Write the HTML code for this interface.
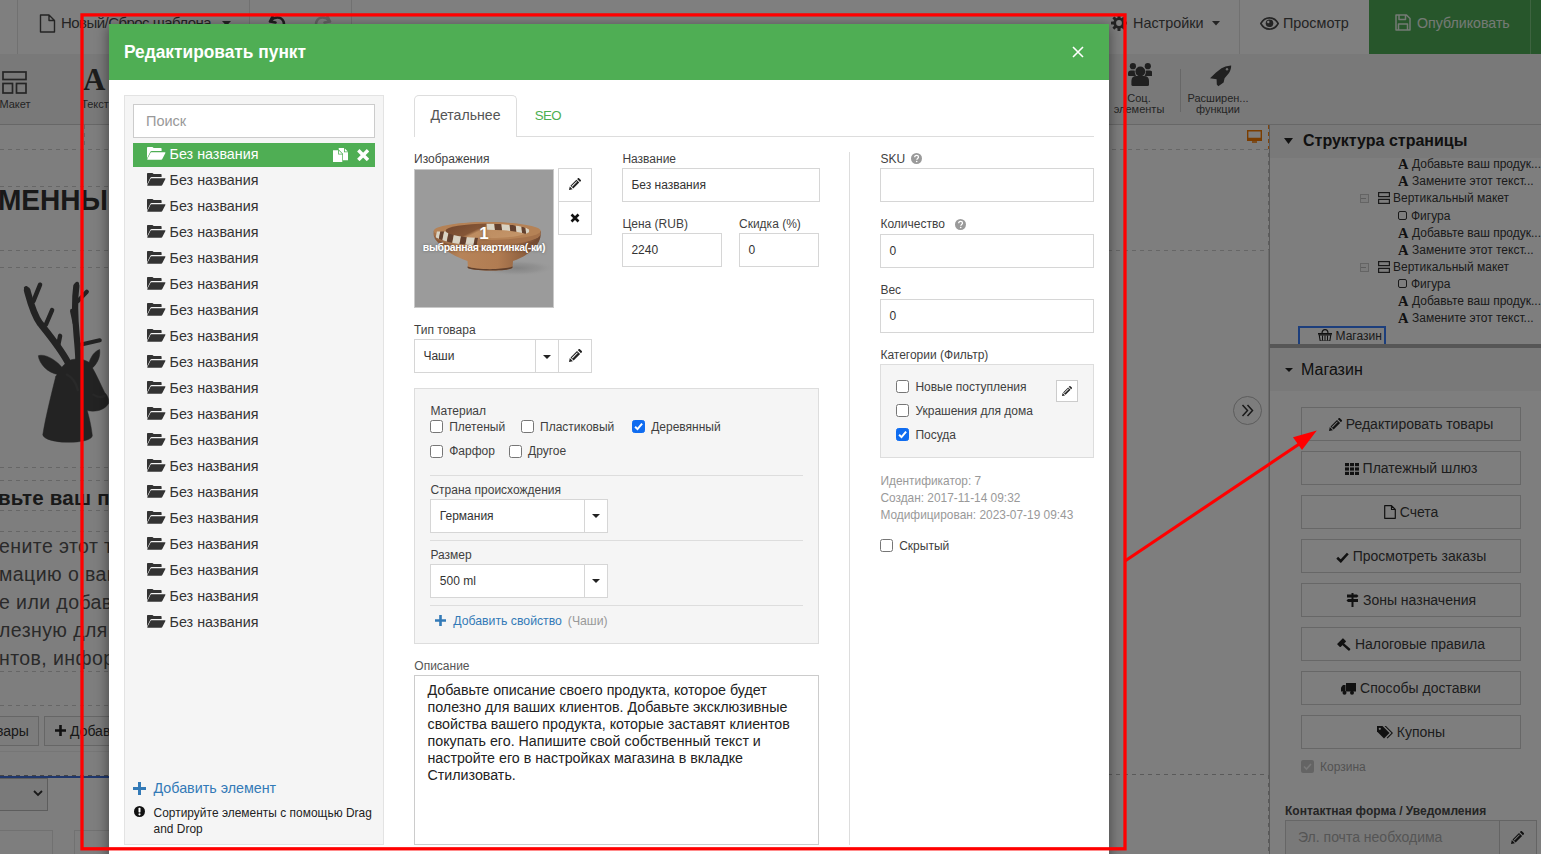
<!DOCTYPE html>
<html lang="ru">
<head>
<meta charset="utf-8">
<title>Редактировать пункт</title>
<style>
*{box-sizing:border-box;margin:0;padding:0}
html,body{width:1541px;height:854px;overflow:hidden;background:#fff;font-family:"Liberation Sans",sans-serif}
body{font-family:"Liberation Sans",sans-serif;font-size:12px;color:#333;position:relative}
.abs{position:absolute}
.nw{white-space:nowrap}
svg{display:block}
/* ---------- background page ---------- */
#page{position:absolute;left:0;top:0;width:1541px;height:854px;background:#fff;overflow:hidden}
#topbar{position:absolute;left:0;top:0;width:1541px;height:54px;background:#fff}
#toolbar{position:absolute;left:0;top:54px;width:1541px;height:71px;background:#f3f3f3;border-bottom:1px solid #cfcfcf}
.vsep{position:absolute;width:1px;background:#e2e2e2}
.tbtxt{position:absolute;font-size:15.5px;color:#484848;white-space:nowrap;line-height:20px;top:13px}
.tlabel{position:absolute;font-size:11px;line-height:11px;color:#4a4a4a;text-align:center;white-space:nowrap}
#canvas{position:absolute;left:0;top:125px;width:1269px;height:729px;background:#fdfdfd;overflow:hidden}
#side{position:absolute;left:1269px;top:125px;width:272px;height:729px;background:#fdfdfd;border-left:1px solid #b5b5b5}
.tree{position:absolute;font-size:12px;line-height:14px;color:#363636;white-space:nowrap}
.sbtn{position:absolute;left:30px;width:220px;height:34px;border:1px solid #cfcfcf;background:#fdfdfd;font-size:14px;line-height:32px;color:#3a3a3a;text-align:center;white-space:nowrap}
.sbtn svg{display:inline-block;vertical-align:-2px;margin-right:4px}
.dash-h{position:absolute;height:1px;background:repeating-linear-gradient(90deg,#cdcdcd 0,#cdcdcd 4px,transparent 4px,transparent 8px)}
.dash-v{position:absolute;width:1px;background:repeating-linear-gradient(180deg,#cdcdcd 0,#cdcdcd 4px,transparent 4px,transparent 8px)}
#dim{position:absolute;left:0;top:0;width:1541px;height:854px;background:rgba(0,0,0,.5)}
/* ---------- modal ---------- */
#modal{position:absolute;left:109px;top:24px;width:1000px;height:840px;background:#fff;box-shadow:0 3px 12px 1px rgba(0,0,0,.43)}
#mhead{position:absolute;left:0;top:0;width:1000px;height:56px;background:#4fae54}
#mtitle{position:absolute;left:15px;top:17px;font-size:18.500px;font-weight:700;color:#fff;white-space:nowrap;line-height:22px;transform:scaleX(.936);transform-origin:0 50%}
#lpanel{position:absolute;background:#f5f5f5;border:1px solid #e3e3e3}
#search{position:absolute;background:#fff;border:1px solid #ccc;font-size:14.5px;color:#999;line-height:33px;padding-left:12px}
.li{position:absolute;height:24px;font-size:14.300px;line-height:24px;color:#333;white-space:nowrap}
.li .fo{position:absolute;left:14.400px;top:5px}
.li span{position:absolute;left:36.600px;top:0}
.li.sel{background:#4fae54;color:#fff}.li.sel span{top:-.7px}.li.sel .fo{top:4.400px}
.lbl{position:absolute;font-size:12px;line-height:14px;color:#3f3f3f;white-space:nowrap}
.inp{position:absolute;height:34px;background:#fff;border:1px solid #d6d6d6;font-size:12px;line-height:32px;color:#333;padding-left:8.400px;white-space:nowrap}
.ibtn{position:absolute;background:#fff;border:1px solid #d6d6d6}
.cb{position:absolute;width:13px;height:13px;border:1px solid #767676;border-radius:2.5px;background:#fff}
.cb.on{background:#0f6cf0;border-color:#0f6cf0}
.cbl{position:absolute;font-size:12px;line-height:14px;color:#3f3f3f;white-space:nowrap}
.hr{position:absolute;height:1px;background:#ddd}
</style>
</head>
<body>
<div id="page">
<div id="topbar">
<div class="vsep" style="left:17px;top:0;height:54px"></div>
<svg class="abs" style="left:39px;top:14px" width="17" height="19" viewBox="0 0 17 19"><path d="M1.5 1h8.5l5.5 5.5V18h-14zM10 1v5.5h5.500" fill="none" stroke="#484848" stroke-width="1.4" stroke-linejoin="round"/></svg>
<div class="tbtxt" style="left:61px;letter-spacing:-.55px;font-size:15px">Новый/Сброс шаблона</div>
<svg class="abs" style="left:222px;top:21px" width="9" height="5" viewBox="0 0 9 5"><path d="M0 0h9L4.500 5z" fill="#484848"/></svg>
<div class="vsep" style="left:249px;top:0;height:54px"></div>
<svg class="abs" style="left:268px;top:13px" width="19" height="19" viewBox="0 0 19 19"><path d="M4.500 3.500L2 8.500l5.500 1M2.500 8C6 3.500 13 3 15.500 8.500c1.500 4-1 8-5.500 9" fill="none" stroke="#3c3c3c" stroke-width="2.600" stroke-linecap="round" stroke-linejoin="round"/></svg>
<svg class="abs" style="left:313px;top:13px" width="19" height="19" viewBox="0 0 19 19"><path d="M14.500 3.500L17 8.500l-5.500 1M16.500 8C13 3.500 6 3 3.500 8.500c-1.500 4 1 8 5.500 9" fill="none" stroke="#c4c4c4" stroke-width="2.600" stroke-linecap="round" stroke-linejoin="round"/></svg>
<div class="vsep" style="left:351px;top:0;height:54px"></div>
<!-- gear -->
<svg class="abs" style="left:1111px;top:15px" width="16" height="16" viewBox="0 0 16 16"><g fill="#484848"><circle cx="8" cy="8" r="5.600"/><g id="gt"><rect x="6.500" y="0" width="3" height="16" rx=".6"/><rect x="6.500" y="0" width="3" height="16" rx=".6" transform="rotate(45 8 8)"/><rect x="6.500" y="0" width="3" height="16" rx=".6" transform="rotate(90 8 8)"/><rect x="6.500" y="0" width="3" height="16" rx=".6" transform="rotate(135 8 8)"/></g></g><circle cx="8" cy="8" r="2.900" fill="#fff"/></svg>
<div class="tbtxt" style="left:1133px;font-size:14.400px">Настройки</div>
<svg class="abs" style="left:1212px;top:21px" width="8" height="4.500" viewBox="0 0 9 5"><path d="M0 0h9L4.500 5z" fill="#484848"/></svg>
<div class="vsep" style="left:1239px;top:0;height:54px"></div>
<!-- eye -->
<svg class="abs" style="left:1260px;top:17px" width="19" height="13" viewBox="0 0 19 13"><path d="M.8 6.500C3 2.500 6 .9 9.500 .9s6.500 1.600 8.700 5.600c-2.200 4-5.200 5.600-8.700 5.600S3 10.500 .8 6.500z" fill="none" stroke="#484848" stroke-width="1.600"/><circle cx="9.500" cy="6.300" r="3.800" fill="#484848"/><circle cx="8.300" cy="5" r="1.200" fill="#fff"/></svg>
<div class="tbtxt" style="left:1283px;font-size:14.400px">Просмотр</div>
<div class="abs" style="left:1369px;top:0;width:172px;height:54px;background:#4fac56"></div>
<div class="abs" style="left:1530px;top:0;width:1px;height:54px;background:#7cc880"></div>
<!-- save -->
<svg class="abs" style="left:1395px;top:14px" width="16" height="17" viewBox="0 0 16 17"><path d="M1 1h10.500l3.500 3.500V16H1zM4 1v4.500h6.500V1M3.500 16v-6h9v6" fill="none" stroke="#e8f5e9" stroke-width="1.500" stroke-linejoin="round"/></svg>
<div class="tbtxt" style="left:1417px;color:#e8f5e9;font-size:14.2px">Опубликовать</div>
</div>

<div id="toolbar">
<!-- maket icon -->
<svg class="abs" style="left:2px;top:17px" width="25" height="23" viewBox="0 0 25 23"><g fill="none" stroke="#4a4a4a" stroke-width="1.700"><rect x="1" y="1" width="23" height="7.500"/><rect x="1" y="12.500" width="9.500" height="9.500"/><rect x="14.500" y="12.500" width="9.500" height="9.500"/></g></svg>
<div class="tlabel" style="left:-10px;width:50px;top:45px">Макет</div>
<div class="abs nw" style="left:83px;top:8px;font-family:'Liberation Serif',serif;font-weight:700;font-size:31px;line-height:36px;color:#3a3a3a">A</div>
<div class="tlabel" style="left:70px;width:50px;top:45px">Текст</div>
<!-- users -->
<svg class="abs" style="left:1127.500px;top:9px" width="24.500" height="23" viewBox="0 0 24.500 23"><g fill="#404040"><circle cx="4.900" cy="3.200" r="3.100"/><circle cx="19.800" cy="3.200" r="3.100"/><circle cx="12.300" cy="8.500" r="4.900"/><path d="M3.400 21.400V18Q3.400 13 8.400 13H16Q21 13 21 18V21.400Q21 22.900 19.500 22.900H4.900Q3.400 22.900 3.400 21.400z"/><path d="M0 12V10.400Q0 7.500 2.900 7.500H5.800Q6.500 7.500 6.800 7.700Q6.300 10.500 8 13H1Q0 13 0 12z"/><path d="M24.500 12V10.400Q24.500 7.500 21.600 7.500H18.700Q18 7.500 17.700 7.700Q18.200 10.500 16.500 13H23.500Q24.500 13 24.500 12z"/></g></svg>
<div class="tlabel" style="left:1099px;width:80px;top:39px">Соц.</div>
<div class="tlabel" style="left:1099px;width:80px;top:50px">элементы</div>
<div class="vsep" style="left:1180px;top:15px;height:43px;background:#cfcfcf"></div>
<!-- rocket -->
<svg class="abs" style="left:1210px;top:10.500px" width="22" height="22" viewBox="0 0 22 22"><path d="M20.900 .4C17 .8 13.500 2 11.500 3.200L6 7.600 0 13.200 6.600 14.200 6.800 19.500 8.300 21.200 13.600 17.400 14.600 13.200 19 8C20.500 5.500 21.200 3 21.200 .5z" fill="#404040"/><circle cx="17" cy="4.200" r="1.200" fill="#ddd"/></svg>
<div class="tlabel" style="left:1178px;width:80px;top:39px">Расширен...</div>
<div class="tlabel" style="left:1178px;width:80px;top:50px">функции</div>
</div>

<div id="canvas">
<!-- coordinates here are page coords minus 125 in y -->
<div class="dash-h" style="left:0;top:24px;width:1269px"></div>
<div class="dash-v" style="left:84px;top:0;height:24px"></div>
<div class="dash-h" style="left:0;top:61px;width:110px"></div>
<div class="abs nw" style="left:-392px;top:52px;width:500px;text-align:right;font-size:30px;font-weight:700;line-height:46px;color:#333;transform:scaleX(.935);transform-origin:100% 50%">СОВРЕМЕННЫ</div>
<div class="dash-h" style="left:0;top:125px;width:110px"></div>
<div class="dash-h" style="left:0;top:142px;width:110px"></div>
<!-- deer -->
<svg class="abs" style="left:0;top:145px" width="130" height="190" viewBox="0 0 584 854"><g fill="#474747" stroke="#474747" stroke-linecap="round" stroke-linejoin="round">
<path stroke-width="30" fill="none" d="M305 415C270 350 220 290 180 240C150 200 135 140 122 92"/>
<path stroke-width="20" fill="none" d="M150 140L180 66M206 245L234 180M262 335L270 296M122 92L117 82"/>
<path stroke-width="28" fill="none" d="M352 405C350 300 325 200 343 72"/>
<path stroke-width="19" fill="none" d="M350 140L390 98M365 335L448 316M336 240L324 184M343 72L346 62"/>
<path stroke-width="2" d="M250 480C230 560 205 660 192 740C200 785 410 785 415 745C410 700 400 660 392 632C430 640 470 630 488 600C492 580 480 560 470 550C450 510 430 460 400 415C370 395 320 395 300 415C280 430 262 455 250 480z"/>
<path stroke-width="2" d="M285 445C250 400 200 375 172 385C175 420 215 465 262 470z"/>
<path stroke-width="2" d="M398 425C405 390 425 365 448 357C452 385 440 420 415 440z"/>
</g><path d="M300 470c20 10 40 30 50 70M420 560c15 10 35 15 50 5" stroke="#5a5a5a" stroke-width="10" fill="none" stroke-linecap="round" opacity=".6"/></svg>
<div class="dash-h" style="left:0;top:342px;width:110px"></div>
<div class="dash-h" style="left:0;top:355px;width:110px"></div>
<div class="abs nw" id="h2" style="left:-2px;top:360px;font-size:20.500px;font-weight:700;line-height:26px;color:#333;letter-spacing:.25px">вьте ваш продукт</div>
<div class="dash-h" style="left:0;top:385px;width:110px"></div>
<div class="dash-h" style="left:0;top:406px;width:110px"></div>
<div class="abs nw" id="ptx" style="left:-1px;top:407px;font-size:19.500px;line-height:28px;color:#555;letter-spacing:.42px">ените этот текст<br>мацию о вашем<br>е или добавьте<br>лезную для ваших<br>нтов, информацию</div>
<div class="dash-h" style="left:0;top:546px;width:110px"></div>
<div class="dash-h" style="left:0;top:580px;width:110px"></div>
<div class="abs" style="left:-30px;top:591px;width:69px;height:30px;border:1px solid #ccc;background:#f8f8f8"></div>
<div class="abs nw" style="left:-4px;top:598px;font-size:14px;line-height:16px;color:#333">вары</div>
<div class="abs" style="left:44px;top:591px;width:120px;height:30px;border:1px solid #ccc;background:#f8f8f8"></div>
<svg class="abs" style="left:55px;top:600px" width="11" height="11" viewBox="0 0 11 11"><path d="M5.500 0v11M0 5.500h11" stroke="#222" stroke-width="2.600"/></svg>
<div class="abs nw" style="left:70px;top:598px;font-size:14px;line-height:16px;color:#333">Добавить</div>
<div class="dash-h" style="left:0;top:649.500px;width:110px;background:repeating-linear-gradient(90deg,#8a8a8a 0,#8a8a8a 4px,transparent 4px,transparent 8px)"></div>
<div class="abs" style="left:0;top:651px;width:110px;height:2px;background:#3f6fd8"></div><div class="abs" style="left:0;top:626px;width:110px;height:1px;background:#ececec"></div>
<div class="abs" style="left:-5px;top:652.500px;width:53px;height:33px;border:1px solid #bbb;background:#f4f4f4"></div>
<svg class="abs" style="left:33px;top:665px" width="10" height="7" viewBox="0 0 10 7"><path d="M1 1l4 4 4-4" fill="none" stroke="#333" stroke-width="1.800"/></svg>
<div class="abs" style="left:-5px;top:705px;width:58px;height:40px;border:1px solid #e2e2e2"></div>
<div class="abs" style="left:74px;top:705px;width:58px;height:40px;border:1px solid #e2e2e2"></div>
<!-- right of modal -->
<div class="dash-h" style="left:1100px;top:125px;width:169px"></div>
<div class="dash-h" style="left:1100px;top:649px;width:169px;background:repeating-linear-gradient(90deg,#b4b4b4 0,#b4b4b4 4px,transparent 4px,transparent 8px)"></div>

<div class="dash-v" style="left:1268px;top:0;height:24px;background:repeating-linear-gradient(180deg,#ff8a1a 0,#ff8a1a 4px,transparent 4px,transparent 7px)"></div>
<div class="dash-v" style="left:1268px;top:28px;height:97px;background:repeating-linear-gradient(180deg,#bdbdbd 0,#bdbdbd 4px,transparent 4px,transparent 8px)"></div><div class="abs" style="left:1268px;top:125px;width:1px;height:525px;background:#d9d9d9"></div><div class="dash-v" style="left:1268px;top:650px;height:80px;background:repeating-linear-gradient(180deg,#b4b4b4 0,#b4b4b4 4px,transparent 4px,transparent 8px)"></div>
<!-- monitor -->
<svg class="abs" style="left:1247px;top:5px" width="15" height="13" viewBox="0 0 15 13"><path d="M.7 .7h13.600v9.600H.7z" fill="none" stroke="#f57a00" stroke-width="1.400"/><path d="M.7 7.800h13.600v2.500H.7zM5 11.300h5v1.500H5z" fill="#f57a00"/></svg>
<!-- >> circle -->
<div class="abs" style="left:1233px;top:270.500px;width:29px;height:29px;border:1px solid #b8b8b8;border-radius:50%;background:#fbfbfb"></div>
<svg class="abs" style="left:1241px;top:278.500px" width="13" height="13" viewBox="0 0 13 13"><path d="M1.500 1l5 5.500-5 5.500M6.500 1l5 5.500-5 5.500" fill="none" stroke="#333" stroke-width="1.500"/></svg>
</div>

<div id="side">
<div class="abs" style="left:0;top:0;width:272px;height:33px;background:#f3f3f3"></div><div class="abs" style="left:0;top:223px;width:272px;height:43px;background:#f3f3f3"></div>
<svg class="abs" style="left:14px;top:13px" width="9" height="6" viewBox="0 0 9 6"><path d="M0 0h9L4.500 6z" fill="#222"/></svg>
<div class="abs nw" style="left:33px;top:6px;font-size:16px;font-weight:700;line-height:20px;color:#222">Структура страницы</div>
<div class="abs" style="left:128px;top:31px;font-family:'Liberation Serif',serif;font-weight:700;font-size:14.500px;line-height:16px;color:#222">A</div>
<div class="tree" style="left:142px;top:32px">Добавьте ваш продук...</div>
<div class="abs" style="left:128px;top:48px;font-family:'Liberation Serif',serif;font-weight:700;font-size:14.500px;line-height:16px;color:#222">A</div>
<div class="tree" style="left:142px;top:49px">Замените этот текст...</div>
<div class="abs" style="left:90px;top:69px;width:9px;height:9px;border:1px solid #c9c9c9;background:#f6f6f6"><div class="abs" style="left:0px;top:3px;width:5px;height:1px;background:#bbb"></div></div>
<svg class="abs" style="left:108px;top:67px" width="12" height="12" viewBox="0 0 12 12"><g fill="none" stroke="#333" stroke-width="1.200"><rect x=".6" y=".6" width="10.800" height="4"/><rect x=".6" y="7.400" width="10.800" height="4"/></g></svg>
<div class="tree" style="left:123px;top:66px">Вертикальный макет</div>
<div class="abs" style="left:128px;top:85.5px;width:9px;height:9px;border:1px solid #333;border-radius:2px"></div>
<div class="tree" style="left:141px;top:83.5px">Фигура</div>
<div class="abs" style="left:128px;top:100px;font-family:'Liberation Serif',serif;font-weight:700;font-size:14.500px;line-height:16px;color:#222">A</div>
<div class="tree" style="left:142px;top:101px">Добавьте ваш продук...</div>
<div class="abs" style="left:128px;top:117px;font-family:'Liberation Serif',serif;font-weight:700;font-size:14.500px;line-height:16px;color:#222">A</div>
<div class="tree" style="left:142px;top:118px">Замените этот текст...</div>
<div class="abs" style="left:90px;top:138px;width:9px;height:9px;border:1px solid #c9c9c9;background:#f6f6f6"><div class="abs" style="left:0px;top:3px;width:5px;height:1px;background:#bbb"></div></div>
<svg class="abs" style="left:108px;top:136px" width="12" height="12" viewBox="0 0 12 12"><g fill="none" stroke="#333" stroke-width="1.200"><rect x=".6" y=".6" width="10.800" height="4"/><rect x=".6" y="7.400" width="10.800" height="4"/></g></svg>
<div class="tree" style="left:123px;top:135px">Вертикальный макет</div>
<div class="abs" style="left:128px;top:153.5px;width:9px;height:9px;border:1px solid #333;border-radius:2px"></div>
<div class="tree" style="left:141px;top:151.5px">Фигура</div>
<div class="abs" style="left:128px;top:168px;font-family:'Liberation Serif',serif;font-weight:700;font-size:14.500px;line-height:16px;color:#222">A</div>
<div class="tree" style="left:142px;top:169px">Добавьте ваш продук...</div>
<div class="abs" style="left:128px;top:185px;font-family:'Liberation Serif',serif;font-weight:700;font-size:14.500px;line-height:16px;color:#222">A</div>
<div class="tree" style="left:142px;top:186px">Замените этот текст...</div>
<div class="abs" style="left:28px;top:201px;width:88px;height:22px;border:2px solid #387cf8"></div>
<svg class="abs" style="left:48px;top:204px" width="14" height="12" viewBox="0 0 14 12"><path d="M4 4.500C4 1.500 5.500 .7 7 .7s3 .8 3 3.800" fill="none" stroke="#222" stroke-width="1.200"/><path d="M0 4h14v1.600H0z" fill="#222"/><path d="M1.200 6h11.600l-1 6H2.200z" fill="none" stroke="#222" stroke-width="1.100"/><path d="M4.500 6.500v5M7 6.500v5M9.500 6.500v5" stroke="#222" stroke-width="1"/></svg>
<div class="tree" style="left:65.5px;top:204px">Магазин</div>
<div class="abs" style="left:0;top:219px;width:272px;height:4px;background:#adadad"></div>
<svg class="abs" style="left:15px;top:243px" width="8" height="4" viewBox="0 0 8 4"><path d="M0 0h8L4 4z" fill="#222"/></svg>
<div class="abs nw" style="left:31px;top:235px;font-size:16px;line-height:20px;color:#222">Магазин</div>
<div class="sbtn" style="left:31px;top:282px"><svg width="13" height="13" viewBox="0 0 13 13"><path d="M0 13l.8-3.900 3.100 3.100zM1.500 8.400L8 1.900l3.100 3.100-6.500 6.500zM2.800 8.700l.7.700 5.300-5.300-.7-.7zM8.800 1.100L9.700.2q.6-.5 1.200 0l1.900 1.900q.5.600 0 1.200l-.9.900z" fill-rule="evenodd" fill="#222"/></svg>Редактировать товары</div>
<div class="sbtn" style="left:31px;top:326px"><svg width="14" height="12" viewBox="0 0 14 12"><g fill="#222"><rect x="0" y="0" width="4" height="3.200"/><rect x="5" y="0" width="4" height="3.200"/><rect x="10" y="0" width="4" height="3.200"/><rect x="0" y="4.400" width="4" height="3.200"/><rect x="5" y="4.400" width="4" height="3.200"/><rect x="10" y="4.400" width="4" height="3.200"/><rect x="0" y="8.800" width="4" height="3.200"/><rect x="5" y="8.800" width="4" height="3.200"/><rect x="10" y="8.800" width="4" height="3.200"/></g></svg>Платежный шлюз</div>
<div class="sbtn" style="left:31px;top:370px"><svg width="12" height="14" viewBox="0 0 12 14"><path d="M.7 .7h6.800l3.800 3.800v8.800H.7zM7.500 .7v3.800h3.800" fill="none" stroke="#222" stroke-width="1.200" stroke-linejoin="round"/></svg>Счета</div>
<div class="sbtn" style="left:31px;top:414px"><svg width="13" height="11" viewBox="0 0 13 11"><path d="M1.200 5.800l3.600 3.400 7-7.700" fill="none" stroke="#222" stroke-width="2.600"/></svg>Просмотреть заказы</div>
<div class="sbtn" style="left:31px;top:458px"><svg width="13" height="14" viewBox="0 0 13 14"><g fill="#222"><rect x="5.500" y="0" width="2" height="14"/><path d="M1 1.500h10l1.500 1.500L11 4.500H1z"/><path d="M12 6h-10L.5 7.500 2 9h10z"/></g></svg>Зоны назначения</div>
<div class="sbtn" style="left:31px;top:502px"><svg width="14" height="13" viewBox="0 0 14 13"><g fill="#222"><rect x="-4.200" y="-2.300" width="8.400" height="4.600" rx=".5" transform="translate(4.600 4.700) rotate(-45)"/><rect x="0" y="-1.200" width="9.800" height="2.400" rx="1" transform="translate(5.600 5.600) rotate(42)"/></g></svg>Налоговые правила</div>
<div class="sbtn" style="left:31px;top:546px"><svg width="15" height="12" viewBox="0 0 15 12"><g fill="#222"><rect x="5" y="0" width="10" height="8.500"/><path d="M0 8.500V4.500L2 2h2.500v6.500z"/><circle cx="3.500" cy="9.700" r="2"/><circle cx="11" cy="9.700" r="2"/></g></svg>Способы доставки</div>
<div class="sbtn" style="left:31px;top:590px"><svg width="16" height="13" viewBox="0 0 16 13"><g fill="#222"><path d="M0 0h5.500l7 7-5.500 5.500-7-7z"/><path d="M7.500 0h1.500l7 7-5.500 5.500-.8-.8L14.500 7z"/></g><circle cx="2.800" cy="2.800" r="1.100" fill="#fdfdfd"/></svg>Купоны</div>
<div class="abs" style="left:31px;top:635px;width:13px;height:13px;border-radius:2px;background:#c9c9c9"><svg width="13" height="13" viewBox="0 0 13 13"><path d="M3 6.500l2.500 2.500 4.500-5" fill="none" stroke="#f3f3f3" stroke-width="1.600"/></svg></div>
<div class="abs nw" style="left:50px;top:635px;font-size:12px;line-height:14px;color:#a5a5a5">Корзина</div>
<div class="abs nw" style="left:15px;top:679px;font-size:12px;font-weight:700;line-height:14px;color:#4a4a4a">Контактная форма / Уведомления</div>
<div class="abs nw" style="left:15px;top:695px;width:215px;height:40px;border:1px solid #cdcdcd;background:#f3f3f3;font-size:14px;line-height:32px;color:#aaa;padding-left:12px">Эл. почта необходима</div>
<div class="abs" style="left:229px;top:695px;width:38px;height:40px;border:1px solid #c8c8c8;background:#f5f5f5"><svg class="abs" style="left:11px;top:10px" width="13" height="13" viewBox="0 0 13 13"><path d="M0 13l.8-3.900 3.100 3.100zM1.500 8.400L8 1.900l3.100 3.100-6.500 6.500zM2.800 8.700l.7.700 5.300-5.300-.7-.7zM8.800 1.100L9.700.2q.6-.5 1.200 0l1.900 1.900q.5.600 0 1.200l-.9.900z" fill-rule="evenodd" fill="#222"/></svg></div>
</div>
</div>
<div id="dim"></div>
<div id="modal">
<div id="mhead"><div id="mtitle">Редактировать пункт</div>
<svg class="abs" style="left:963px;top:22px" width="12" height="12" viewBox="0 0 12 12"><path d="M1 1L11 11M11 1L1 11" stroke="#fff" stroke-width="1.6" fill="none"/></svg>
</div>
<div id="lpanel" style="left:15px;top:71px;width:260px;height:750px">
<div id="search" style="left:8px;top:8px;width:242px;height:34px">Поиск</div>
<div class="li sel" style="left:8px;top:46.5px;width:242px"><svg class="fo" width="18.500" height="12.700" viewBox="0 0 18.500 12.700"><g fill="#fff"><path d="M0 .7Q0 0 .7 0H5.400L6.700 1.100H13.900Q14.600 1.100 14.600 1.800V4.100H4.700Q3.600 4.100 3.100 5.200L0 11.400z"/><path d="M4.300 5.300H18Q18.800 5.300 18.400 6.100L15.300 12.100Q15 12.700 14.200 12.700H.7Q-.1 12.700 .3 11.900L3.400 5.900Q3.700 5.300 4.300 5.300z"/></g></svg><span>Без названия</span><svg class="abs" style="left:199.500px;top:5.300px" width="15.200" height="14.100" viewBox="0 0 15.200 14.100"><g fill="#fff"><path d="M0 2.300H5.200V6.500H9.300V14.100H0z"/><path d="M6 2.700L9.100 5.800H6z"/><path d="M5.700 0H11V4.300H15.200V12.300H10V5.800L5.700 1.600z"/><path d="M11.800 .4L14.900 3.500H11.800z"/></g></svg><svg class="abs" style="left:223.800px;top:6.400px" width="12.300" height="12.300" viewBox="0 0 12.300 12.300"><path d="M1.300 1.300L11 11M11 1.300L1.300 11" stroke="#fff" stroke-width="3.400" fill="none"/></svg></div>
<div class="li" style="left:8px;top:72px;width:242px"><svg class="fo" width="18.500" height="12.700" viewBox="0 0 18.500 12.700"><g fill="#333"><path d="M0 .7Q0 0 .7 0H5.400L6.700 1.100H13.900Q14.600 1.100 14.600 1.800V4.100H4.700Q3.600 4.100 3.100 5.200L0 11.400z"/><path d="M4.300 5.300H18Q18.800 5.300 18.400 6.100L15.300 12.100Q15 12.700 14.200 12.700H.7Q-.1 12.700 .3 11.900L3.400 5.900Q3.700 5.300 4.300 5.300z"/></g></svg><span>Без названия</span></div>
<div class="li" style="left:8px;top:98px;width:242px"><svg class="fo" width="18.500" height="12.700" viewBox="0 0 18.500 12.700"><g fill="#333"><path d="M0 .7Q0 0 .7 0H5.400L6.700 1.100H13.900Q14.600 1.100 14.600 1.800V4.100H4.700Q3.600 4.100 3.100 5.200L0 11.400z"/><path d="M4.300 5.300H18Q18.800 5.300 18.400 6.100L15.300 12.100Q15 12.700 14.200 12.700H.7Q-.1 12.700 .3 11.900L3.400 5.900Q3.700 5.300 4.300 5.300z"/></g></svg><span>Без названия</span></div>
<div class="li" style="left:8px;top:124px;width:242px"><svg class="fo" width="18.500" height="12.700" viewBox="0 0 18.500 12.700"><g fill="#333"><path d="M0 .7Q0 0 .7 0H5.400L6.700 1.100H13.900Q14.600 1.100 14.600 1.800V4.100H4.700Q3.600 4.100 3.100 5.200L0 11.400z"/><path d="M4.300 5.300H18Q18.800 5.300 18.400 6.100L15.300 12.100Q15 12.700 14.200 12.700H.7Q-.1 12.700 .3 11.900L3.400 5.900Q3.700 5.300 4.300 5.300z"/></g></svg><span>Без названия</span></div>
<div class="li" style="left:8px;top:150px;width:242px"><svg class="fo" width="18.500" height="12.700" viewBox="0 0 18.500 12.700"><g fill="#333"><path d="M0 .7Q0 0 .7 0H5.400L6.700 1.100H13.900Q14.600 1.100 14.600 1.800V4.100H4.700Q3.600 4.100 3.100 5.200L0 11.400z"/><path d="M4.300 5.300H18Q18.800 5.300 18.400 6.100L15.300 12.100Q15 12.700 14.200 12.700H.7Q-.1 12.700 .3 11.900L3.400 5.900Q3.700 5.300 4.300 5.300z"/></g></svg><span>Без названия</span></div>
<div class="li" style="left:8px;top:176px;width:242px"><svg class="fo" width="18.500" height="12.700" viewBox="0 0 18.500 12.700"><g fill="#333"><path d="M0 .7Q0 0 .7 0H5.400L6.700 1.100H13.900Q14.600 1.100 14.600 1.800V4.100H4.700Q3.600 4.100 3.100 5.200L0 11.400z"/><path d="M4.300 5.300H18Q18.800 5.300 18.400 6.100L15.300 12.100Q15 12.700 14.200 12.700H.7Q-.1 12.700 .3 11.900L3.400 5.900Q3.700 5.300 4.300 5.300z"/></g></svg><span>Без названия</span></div>
<div class="li" style="left:8px;top:202px;width:242px"><svg class="fo" width="18.500" height="12.700" viewBox="0 0 18.500 12.700"><g fill="#333"><path d="M0 .7Q0 0 .7 0H5.400L6.700 1.100H13.900Q14.600 1.100 14.600 1.800V4.100H4.700Q3.600 4.100 3.100 5.200L0 11.400z"/><path d="M4.300 5.300H18Q18.800 5.300 18.400 6.100L15.300 12.100Q15 12.700 14.200 12.700H.7Q-.1 12.700 .3 11.900L3.400 5.900Q3.700 5.300 4.300 5.300z"/></g></svg><span>Без названия</span></div>
<div class="li" style="left:8px;top:228px;width:242px"><svg class="fo" width="18.500" height="12.700" viewBox="0 0 18.500 12.700"><g fill="#333"><path d="M0 .7Q0 0 .7 0H5.400L6.700 1.100H13.900Q14.600 1.100 14.600 1.800V4.100H4.700Q3.600 4.100 3.100 5.200L0 11.400z"/><path d="M4.300 5.300H18Q18.800 5.300 18.400 6.100L15.300 12.100Q15 12.700 14.200 12.700H.7Q-.1 12.700 .3 11.900L3.400 5.900Q3.700 5.300 4.300 5.300z"/></g></svg><span>Без названия</span></div>
<div class="li" style="left:8px;top:254px;width:242px"><svg class="fo" width="18.500" height="12.700" viewBox="0 0 18.500 12.700"><g fill="#333"><path d="M0 .7Q0 0 .7 0H5.400L6.700 1.100H13.900Q14.600 1.100 14.600 1.800V4.100H4.700Q3.600 4.100 3.100 5.200L0 11.400z"/><path d="M4.300 5.300H18Q18.800 5.300 18.400 6.100L15.300 12.100Q15 12.700 14.200 12.700H.7Q-.1 12.700 .3 11.900L3.400 5.900Q3.700 5.300 4.300 5.300z"/></g></svg><span>Без названия</span></div>
<div class="li" style="left:8px;top:280px;width:242px"><svg class="fo" width="18.500" height="12.700" viewBox="0 0 18.500 12.700"><g fill="#333"><path d="M0 .7Q0 0 .7 0H5.400L6.700 1.100H13.900Q14.600 1.100 14.600 1.800V4.100H4.700Q3.600 4.100 3.100 5.200L0 11.400z"/><path d="M4.300 5.300H18Q18.800 5.300 18.400 6.100L15.300 12.100Q15 12.700 14.200 12.700H.7Q-.1 12.700 .3 11.900L3.400 5.900Q3.700 5.300 4.300 5.300z"/></g></svg><span>Без названия</span></div>
<div class="li" style="left:8px;top:306px;width:242px"><svg class="fo" width="18.500" height="12.700" viewBox="0 0 18.500 12.700"><g fill="#333"><path d="M0 .7Q0 0 .7 0H5.400L6.700 1.100H13.900Q14.600 1.100 14.600 1.800V4.100H4.700Q3.600 4.100 3.100 5.200L0 11.400z"/><path d="M4.300 5.300H18Q18.800 5.300 18.400 6.100L15.300 12.100Q15 12.700 14.200 12.700H.7Q-.1 12.700 .3 11.900L3.400 5.900Q3.700 5.300 4.300 5.300z"/></g></svg><span>Без названия</span></div>
<div class="li" style="left:8px;top:332px;width:242px"><svg class="fo" width="18.500" height="12.700" viewBox="0 0 18.500 12.700"><g fill="#333"><path d="M0 .7Q0 0 .7 0H5.400L6.700 1.100H13.900Q14.600 1.100 14.600 1.800V4.100H4.700Q3.600 4.100 3.100 5.200L0 11.400z"/><path d="M4.300 5.300H18Q18.800 5.300 18.400 6.100L15.300 12.100Q15 12.700 14.200 12.700H.7Q-.1 12.700 .3 11.900L3.400 5.900Q3.700 5.300 4.300 5.300z"/></g></svg><span>Без названия</span></div>
<div class="li" style="left:8px;top:358px;width:242px"><svg class="fo" width="18.500" height="12.700" viewBox="0 0 18.500 12.700"><g fill="#333"><path d="M0 .7Q0 0 .7 0H5.400L6.700 1.100H13.900Q14.600 1.100 14.600 1.800V4.100H4.700Q3.600 4.100 3.100 5.200L0 11.400z"/><path d="M4.300 5.300H18Q18.800 5.300 18.400 6.100L15.300 12.100Q15 12.700 14.200 12.700H.7Q-.1 12.700 .3 11.900L3.400 5.900Q3.700 5.300 4.300 5.300z"/></g></svg><span>Без названия</span></div>
<div class="li" style="left:8px;top:384px;width:242px"><svg class="fo" width="18.500" height="12.700" viewBox="0 0 18.500 12.700"><g fill="#333"><path d="M0 .7Q0 0 .7 0H5.400L6.700 1.100H13.900Q14.600 1.100 14.600 1.800V4.100H4.700Q3.600 4.100 3.100 5.200L0 11.400z"/><path d="M4.300 5.300H18Q18.800 5.300 18.400 6.100L15.300 12.100Q15 12.700 14.200 12.700H.7Q-.1 12.700 .3 11.900L3.400 5.900Q3.700 5.300 4.300 5.300z"/></g></svg><span>Без названия</span></div>
<div class="li" style="left:8px;top:410px;width:242px"><svg class="fo" width="18.500" height="12.700" viewBox="0 0 18.500 12.700"><g fill="#333"><path d="M0 .7Q0 0 .7 0H5.400L6.700 1.100H13.900Q14.600 1.100 14.600 1.800V4.100H4.700Q3.600 4.100 3.100 5.200L0 11.400z"/><path d="M4.300 5.300H18Q18.800 5.300 18.400 6.100L15.300 12.100Q15 12.700 14.200 12.700H.7Q-.1 12.700 .3 11.900L3.400 5.900Q3.700 5.300 4.300 5.300z"/></g></svg><span>Без названия</span></div>
<div class="li" style="left:8px;top:436px;width:242px"><svg class="fo" width="18.500" height="12.700" viewBox="0 0 18.500 12.700"><g fill="#333"><path d="M0 .7Q0 0 .7 0H5.400L6.700 1.100H13.900Q14.600 1.100 14.600 1.800V4.100H4.700Q3.600 4.100 3.100 5.200L0 11.400z"/><path d="M4.300 5.300H18Q18.800 5.300 18.400 6.100L15.300 12.100Q15 12.700 14.200 12.700H.7Q-.1 12.700 .3 11.900L3.400 5.900Q3.700 5.300 4.300 5.300z"/></g></svg><span>Без названия</span></div>
<div class="li" style="left:8px;top:462px;width:242px"><svg class="fo" width="18.500" height="12.700" viewBox="0 0 18.500 12.700"><g fill="#333"><path d="M0 .7Q0 0 .7 0H5.400L6.700 1.100H13.900Q14.600 1.100 14.600 1.800V4.100H4.700Q3.600 4.100 3.100 5.200L0 11.400z"/><path d="M4.300 5.300H18Q18.800 5.300 18.400 6.100L15.300 12.100Q15 12.700 14.200 12.700H.7Q-.1 12.700 .3 11.900L3.400 5.900Q3.700 5.300 4.300 5.300z"/></g></svg><span>Без названия</span></div>
<div class="li" style="left:8px;top:488px;width:242px"><svg class="fo" width="18.500" height="12.700" viewBox="0 0 18.500 12.700"><g fill="#333"><path d="M0 .7Q0 0 .7 0H5.400L6.700 1.100H13.900Q14.600 1.100 14.600 1.800V4.100H4.700Q3.600 4.100 3.100 5.200L0 11.400z"/><path d="M4.300 5.300H18Q18.800 5.300 18.400 6.100L15.300 12.100Q15 12.700 14.200 12.700H.7Q-.1 12.700 .3 11.900L3.400 5.900Q3.700 5.300 4.300 5.300z"/></g></svg><span>Без названия</span></div>
<div class="li" style="left:8px;top:514px;width:242px"><svg class="fo" width="18.500" height="12.700" viewBox="0 0 18.500 12.700"><g fill="#333"><path d="M0 .7Q0 0 .7 0H5.400L6.700 1.100H13.900Q14.600 1.100 14.600 1.800V4.100H4.700Q3.600 4.100 3.100 5.200L0 11.400z"/><path d="M4.300 5.300H18Q18.800 5.300 18.400 6.100L15.300 12.100Q15 12.700 14.200 12.700H.7Q-.1 12.700 .3 11.900L3.400 5.900Q3.700 5.300 4.300 5.300z"/></g></svg><span>Без названия</span></div>
<svg class="abs" style="left:7.5px;top:685.5px" width="13" height="13" viewBox="0 0 13 13"><path d="M6.500 0v13M0 6.500h13" stroke="#337ab7" stroke-width="3"/></svg>
<div class="abs nw" style="left:28.5px;top:684px;font-size:14.300px;line-height:16px;color:#337ab7">Добавить элемент</div>
<svg class="abs" style="left:8.5px;top:710px" width="11" height="11" viewBox="0 0 11 11"><circle cx="5.500" cy="5.500" r="5.500" fill="#111"/><rect x="4.500" y="1.800" width="2" height="4.600" rx=".6" fill="#fff"/><circle cx="5.500" cy="8.300" r="1.100" fill="#fff"/></svg>
<div class="abs" style="left:28.5px;top:708.5px;font-size:11.900px;line-height:16.300px;color:#222;white-space:nowrap;letter-spacing:.04px">Сортируйте элементы с помощью Drag<br>and Drop</div>
</div>
<div class="abs" style="left:305px;top:111.5px;width:680px;height:1px;background:#ddd"></div>
<div class="abs" style="left:305px;top:71px;width:103px;height:41.500px;border:1px solid #ddd;border-bottom:none;border-radius:5px 5px 0 0;background:#fff"></div>
<div class="abs nw" style="left:321.4px;top:83px;font-size:14.100px;line-height:17px;color:#555">Детальнее</div>
<div class="abs nw" style="left:425.7px;top:83px;font-size:13.300px;letter-spacing:-.55px;line-height:17px;color:#4caf50">SEO</div>
<div class="lbl" style="left:305px;top:128px;">Изображения</div>
<div class="abs" style="left:305px;top:144.5px;width:140px;height:139px;background:#9b9b9b;border:1px solid #c9c9c9;overflow:hidden"><svg class="abs" style="left:0;top:0" width="138" height="137" viewBox="0 0 138 137">
<defs>
<linearGradient id="bw" x1="0" y1="0" x2="1" y2="0"><stop offset="0" stop-color="#8f5f3d"/><stop offset=".25" stop-color="#b78459"/><stop offset=".6" stop-color="#b17c52"/><stop offset=".85" stop-color="#8e603f"/><stop offset="1" stop-color="#6e4630"/></linearGradient>
<linearGradient id="bi" x1="0" y1="0" x2="1" y2=".35"><stop offset="0" stop-color="#6f452e"/><stop offset=".45" stop-color="#855636"/><stop offset=".52" stop-color="#bd8c60"/><stop offset="1" stop-color="#c39468"/></linearGradient>
<radialGradient id="sh" cx=".5" cy=".5" r=".5"><stop offset="0" stop-color="#828282"/><stop offset=".6" stop-color="#8e8e8e" stop-opacity=".7"/><stop offset="1" stop-color="#9b9b9b" stop-opacity="0"/></radialGradient>
<clipPath id="fw"><ellipse cx="72.200" cy="63.800" rx="53.500" ry="11.800"/></clipPath>
<clipPath id="ie"><ellipse cx="72.600" cy="60.800" rx="42" ry="7.200"/></clipPath>
<clipPath id="fa"><path d="M30.600 60.800A42 7.200 0 0 1 114.600 60.800L114.600 67A42 7.200 0 0 0 30.600 67z"/></clipPath>
</defs>
<ellipse cx="102" cy="98" rx="38" ry="8" fill="url(#sh)"/>
<path d="M18.700 61L18.800 66C24 78 38 86 52.500 91L53 97.500C53.500 101.500 97 101.500 97.500 97.500L98 91C110 87 124 78 125.600 66L125.700 61z" fill="url(#bw)"/>
<path d="M52.500 96.500c8 3.500 37 3.500 45 0v1c-.5 4-44.500 4-45 0z" fill="#5f3f2c"/>
<path d="M19 67c10 14 96 14 106.500 0c-4 17-102 17-106.500 0z" fill="#6e4630" opacity=".45"/>
<ellipse cx="72.200" cy="63.800" rx="53.500" ry="11.800" fill="#a5724b"/><ellipse cx="72.200" cy="61" rx="53.500" ry="9" fill="#b58256"/><g clip-path="url(#fw)"><path d="M21.9 61.500L25.3 61.500L21.6 80L18.2 80z" fill="#d9d3c4"/><path d="M25.3 61.500L29.1 61.500L25.4 80L21.6 80z" fill="#63412f"/><path d="M29.1 61.500L33.8 61.500L30.1 80L25.4 80z" fill="#d9d3c4"/><path d="M33.8 61.500L39.5 61.500L35.8 80L30.1 80z" fill="#63412f"/><path d="M39.5 61.500L47.0 61.500L43.3 80L35.8 80z" fill="#d9d3c4"/><path d="M47.0 61.500L53.0 61.500L49.3 80L43.3 80z" fill="#63412f"/><path d="M53.0 61.500L61.2 61.500L57.5 80L49.3 80z" fill="#d9d3c4"/><path d="M61.2 61.500L64.3 61.500L60.6 80L57.5 80z" fill="#63412f"/></g>
<ellipse cx="72.600" cy="60.800" rx="42" ry="7.200" fill="url(#bi)"/>
<g clip-path="url(#ie)"><g clip-path="url(#fa)"><path d="M71.1 50L78.9 50L80.4 64L72.6 64z" fill="#d9d3c4"/><path d="M78.9 50L86.0 50L87.5 64L80.4 64z" fill="#63412f"/><path d="M86.0 50L94.1 50L95.6 64L87.5 64z" fill="#d9d3c4"/><path d="M94.1 50L100.2 50L101.7 64L95.6 64z" fill="#63412f"/><path d="M100.2 50L105.7 50L107.2 64L101.7 64z" fill="#d9d3c4"/><path d="M105.7 50L109.7 50L111.2 64L107.2 64z" fill="#63412f"/><path d="M109.7 50L112.9 50L114.4 64L111.2 64z" fill="#d9d3c4"/></g></g>
</svg><div class="abs" style="left:0;top:54px;width:138px;text-align:center;font-size:17px;font-weight:700;line-height:20px;color:#fff;text-shadow:0 0 3px rgba(0,0,0,.35)">1</div><div class="abs nw" id="vk" style="left:-10px;top:71.500px;width:158px;text-align:center;font-size:10.500px;font-weight:700;line-height:12px;color:#fff;letter-spacing:-.35px;text-shadow:0 0 3px rgba(0,0,0,.35)">выбранная картинка(-ки)</div></div>
<div class="ibtn" style="left:449px;top:144px;width:34px;height:34px"><div class="abs" style="left:10px;top:9px"><svg width="12" height="12" viewBox="0 0 13 13"><path d="M0 13l.8-3.900 3.100 3.100zM1.500 8.400L8 1.900l3.100 3.100-6.500 6.500zM2.800 8.700l.7.700 5.300-5.300-.7-.7zM8.800 1.100L9.700.2q.6-.5 1.200 0l1.900 1.900q.5.600 0 1.200l-.9.900z" fill-rule="evenodd" fill="#222"/></svg></div></div>
<div class="ibtn" style="left:449px;top:177px;width:34px;height:34px"><svg class="abs" style="left:11px;top:11px" width="10" height="10" viewBox="0 0 10 10"><path d="M1.500 1.500l7 7M8.500 1.500l-7 7" stroke="#111" stroke-width="2.600" fill="none"/></svg></div>
<div class="lbl" style="left:305px;top:299.2px;">Тип товара</div>
<div class="inp" style="left:305px;top:315px;width:178px;height:34px;line-height:32px">Чаши</div>
<div class="abs" style="left:426px;top:315px;width:1px;height:34px;background:#d6d6d6"></div>
<div class="abs" style="left:449px;top:315px;width:1px;height:34px;background:#d6d6d6"></div>
<svg class="abs" style="left:434px;top:330.5px" width="8" height="4" viewBox="0 0 8 4"><path d="M0 0h8L4 4z" fill="#222"/></svg>
<div class="abs" style="left:459.5px;top:324.5px"><svg width="13" height="13" viewBox="0 0 13 13"><path d="M0 13l.8-3.900 3.100 3.100zM1.500 8.400L8 1.900l3.100 3.100-6.500 6.500zM2.800 8.700l.7.700 5.300-5.300-.7-.7zM8.800 1.100L9.700.2q.6-.5 1.200 0l1.900 1.900q.5.600 0 1.200l-.9.900z" fill-rule="evenodd" fill="#222"/></svg></div>
<div class="lbl" style="left:513.4px;top:128px;">Название</div>
<div class="inp" style="left:513px;top:144px;width:198px;height:34px;line-height:32px">Без названия</div>
<div class="lbl" style="left:513.4px;top:193px;">Цена (RUB)</div>
<div class="inp" style="left:513px;top:209px;width:100px;height:34px;line-height:32px">2240</div>
<div class="lbl" style="left:630px;top:193px;">Скидка (%)</div>
<div class="inp" style="left:630px;top:209px;width:80px;height:34px;line-height:32px">0</div>
<div class="abs" style="left:305px;top:364px;width:405px;height:255.500px;background:#f5f5f5;border:1px solid #ddd"></div>
<div class="lbl" style="left:321.400px;top:379.7px;">Материал</div>
<div class="cb" style="left:321.400px;top:396px"></div>
<div class="cbl" style="left:340.2px;top:395.7px">Плетеный</div>
<div class="cb" style="left:412px;top:396px"></div>
<div class="cbl" style="left:431px;top:395.7px">Пластиковый</div>
<div class="cb on" style="left:523px;top:396px"><svg width="11" height="11" viewBox="0 0 11 11" style="position:absolute;left:0;top:0"><path d="M2.100 5.700l2.400 2.400 4.600-5.500" fill="none" stroke="#fff" stroke-width="2"/></svg></div>
<div class="cbl" style="left:542.2px;top:395.7px">Деревянный</div>
<div class="cb" style="left:321.400px;top:420.5px"></div>
<div class="cbl" style="left:340.2px;top:420.2px">Фарфор</div>
<div class="cb" style="left:400px;top:420.5px"></div>
<div class="cbl" style="left:419px;top:420.2px">Другое</div>
<div class="hr" style="left:321.400px;top:451px;width:373px"></div>
<div class="lbl" style="left:321.400px;top:458.7px;">Страна происхождения</div>
<div class="inp" style="left:321.400px;top:475px;width:178px;height:34px;line-height:32px">Германия</div>
<div class="abs" style="left:475px;top:475px;width:1px;height:34px;background:#d6d6d6"></div>
<svg class="abs" style="left:483px;top:490px" width="8" height="4" viewBox="0 0 8 4"><path d="M0 0h8L4 4z" fill="#222"/></svg>
<div class="hr" style="left:321.400px;top:516px;width:373px"></div>
<div class="lbl" style="left:321.400px;top:524px;">Размер</div>
<div class="inp" style="left:321.400px;top:540px;width:178px;height:34px;line-height:32px">500 ml</div>
<div class="abs" style="left:475px;top:540px;width:1px;height:34px;background:#d6d6d6"></div>
<svg class="abs" style="left:483px;top:555px" width="8" height="4" viewBox="0 0 8 4"><path d="M0 0h8L4 4z" fill="#222"/></svg>
<div class="hr" style="left:321.400px;top:581px;width:373px"></div>
<svg class="abs" style="left:326px;top:591px" width="11" height="11" viewBox="0 0 11 11"><path d="M5.500 0v11M0 5.500h11" stroke="#337ab7" stroke-width="2.600"/></svg>
<div class="abs nw" style="left:344.3px;top:589.5px;font-size:12.250px;line-height:14px;color:#337ab7">Добавить свойство <span style="color:#999;margin-left:2.500px">(Чаши)</span></div>
<div class="lbl" style="left:305.3px;top:635px;color:#555">Описание</div>
<div class="abs" style="left:305px;top:651px;width:405px;height:170px;background:#fff;border:1px solid #ccc;padding:5.500px 0 0 12.500px;font-size:14.250px;line-height:17px;color:#222;white-space:nowrap">Добавьте описание своего продукта, которое будет<br>полезно для ваших клиентов. Добавьте эксклюзивные<br>свойства вашего продукта, которые заставят клиентов<br>покупать его. Напишите свой собственный текст и<br>настройте его в настройках магазина в вкладке<br>Стилизовать.</div>
<div class="abs" style="left:740px;top:128px;width:1px;height:693px;background:#ddd"></div>
<div class="lbl" style="left:771.4px;top:127.5px;">SKU</div>
<svg class="abs" style="left:801.5px;top:129.0px" width="11" height="11" viewBox="0 0 11 11"><circle cx="5.500" cy="5.500" r="5.500" fill="#9a9a9a"/><path d="M3.700 4.300c0-1.200 .8-1.900 1.900-1.900s1.900 .7 1.900 1.700c0 1.400-1.700 1.400-1.700 2.700" fill="none" stroke="#fff" stroke-width="1.300"/><circle cx="5.700" cy="8.500" r=".8" fill="#fff"/></svg>
<div class="inp" style="left:771px;top:144px;width:214px;height:34px;line-height:32px"></div>
<div class="lbl" style="left:771.4px;top:193px;">Количество</div>
<svg class="abs" style="left:845.8px;top:194.5px" width="11" height="11" viewBox="0 0 11 11"><circle cx="5.500" cy="5.500" r="5.500" fill="#9a9a9a"/><path d="M3.700 4.300c0-1.200 .8-1.900 1.900-1.900s1.900 .7 1.900 1.700c0 1.400-1.700 1.400-1.700 2.700" fill="none" stroke="#fff" stroke-width="1.300"/><circle cx="5.700" cy="8.500" r=".8" fill="#fff"/></svg>
<div class="inp" style="left:771px;top:210px;width:214px;height:34px;line-height:32px">0</div>
<div class="lbl" style="left:771.4px;top:258.7px;">Вес</div>
<div class="inp" style="left:771px;top:275px;width:214px;height:34px;line-height:32px">0</div>
<div class="lbl" style="left:771.4px;top:323.8px;">Категории (Фильтр)</div>
<div class="abs" style="left:771px;top:340px;width:214px;height:94px;background:#f5f5f5;border:1px solid #ddd"></div>
<div class="cb" style="left:787px;top:356.2px"></div>
<div class="cbl" style="left:806.4px;top:356px">Новые поступления</div>
<div class="cb" style="left:787px;top:380px"></div>
<div class="cbl" style="left:806.4px;top:379.8px">Украшения для дома</div>
<div class="cb on" style="left:787px;top:404.2px"><svg width="11" height="11" viewBox="0 0 11 11" style="position:absolute;left:0;top:0"><path d="M2.100 5.700l2.400 2.400 4.600-5.500" fill="none" stroke="#fff" stroke-width="2"/></svg></div>
<div class="cbl" style="left:806.4px;top:404px">Посуда</div>
<div class="ibtn" style="left:947px;top:356px;width:22px;height:22px;border-color:#ccc"><div class="abs" style="left:5px;top:5px"><svg width="10" height="10" viewBox="0 0 13 13"><path d="M0 13l.8-3.900 3.100 3.100zM1.500 8.400L8 1.900l3.100 3.100-6.500 6.500zM2.800 8.700l.7.700 5.300-5.300-.7-.7zM8.800 1.100L9.700.2q.6-.5 1.200 0l1.900 1.900q.5.600 0 1.200l-.9.900z" fill-rule="evenodd" fill="#222"/></svg></div></div>
<div class="abs nw" style="left:771.4px;top:448.5px;font-size:11.900px;line-height:17px;color:#999">Идентификатор: 7<br>Создан: 2017-11-14 09:32<br>Модифицирован: 2023-07-19 09:43</div>
<div class="cb" style="left:771.4px;top:515.2px"></div>
<div class="cbl" style="left:790.2px;top:515px">Скрытый</div>
</div>
<svg class="abs" style="left:0;top:0" width="1541" height="854" viewBox="0 0 1541 854">
<rect x="82" y="14.900" width="1043" height="833.900" fill="none" stroke="#ff0000" stroke-width="3.300"/>
<path d="M1125 561L1300 443.500" stroke="#ff0000" stroke-width="3.100" fill="none"/>
<path d="M1316.800 430.500L1293 437.300 1302 450z" fill="#ff0000"/>
</svg>
</body>
</html>
